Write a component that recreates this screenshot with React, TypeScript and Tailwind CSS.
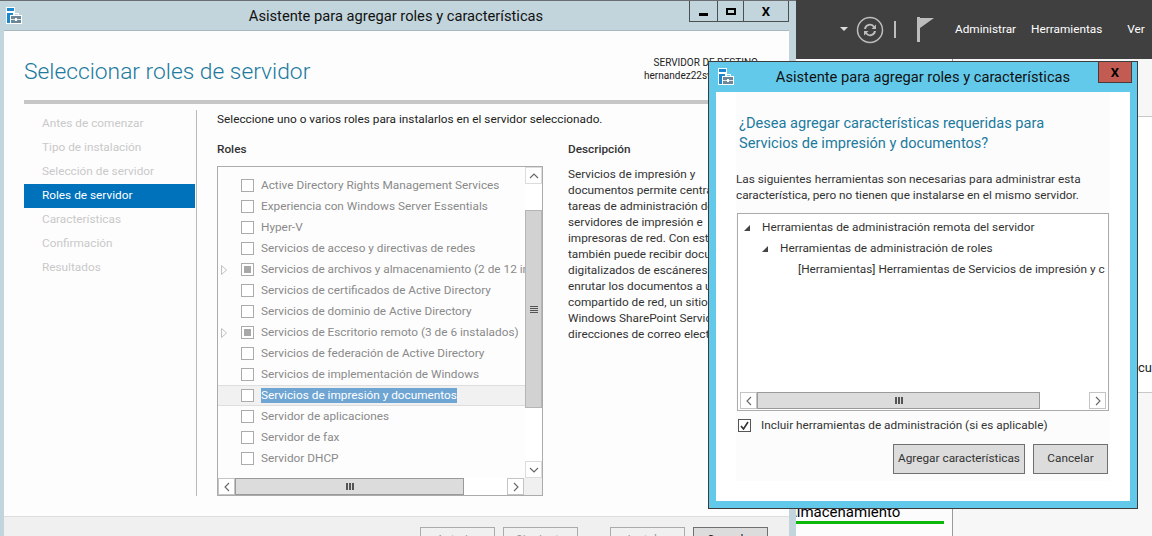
import React from 'react'

const font = "font-['Roboto','Noto_Sans',sans-serif]"

const steps = ['Antes de comenzar', 'Tipo de instalación', 'Selección de servidor', 'Roles de servidor', 'Características', 'Confirmación', 'Resultados']

const roles = [
  { name: 'Active Directory Rights Management Services' },
  { name: 'Experiencia con Windows Server Essentials' },
  { name: 'Hyper-V' },
  { name: 'Servicios de acceso y directivas de redes' },
  { name: 'Servicios de archivos y almacenamiento (2 de 12 instalados)', partial: true },
  { name: 'Servicios de certificados de Active Directory' },
  { name: 'Servicios de dominio de Active Directory' },
  { name: 'Servicios de Escritorio remoto (3 de 6 instalados)', partial: true },
  { name: 'Servicios de federación de Active Directory' },
  { name: 'Servicios de implementación de Windows' },
  { name: 'Servicios de impresión y documentos', selected: true },
  { name: 'Servidor de aplicaciones' },
  { name: 'Servidor de fax' },
  { name: 'Servidor DHCP' },
]

const description = [
  'Servicios de impresión y',
  'documentos permite centralizar las',
  'tareas de administración de',
  'servidores de impresión e',
  'impresoras de red. Con este rol,',
  'también puede recibir documentos',
  'digitalizados de escáneres de red y',
  'enrutar los documentos a un recurso',
  'compartido de red, un sitio de',
  'Windows SharePoint Services o',
  'direcciones de correo electrónico.',
]

const WizardIcon = () => (
  <svg width="16" height="17" viewBox="0 0 16 17" className="shrink-0">
    <rect x="0.5" y="0.5" width="8" height="4" fill="#1a87d0" stroke="#fff" />
    <rect x="0.5" y="5.5" width="8" height="11" fill="#1a87d0" stroke="#fff" />
    <rect x="4.5" y="8.5" width="11" height="8" fill="#6d8797" stroke="#fff" />
    <rect x="5" y="12" width="10" height="1" fill="#dfe8ec" />
    <rect x="7.5" y="6.5" width="5" height="2" fill="none" stroke="#fff" />
    <rect x="9" y="11" width="2" height="3" fill="#fff" />
  </svg>
)

const Chevron = ({ dir }: { dir: 'up' | 'down' | 'left' | 'right' }) => {
  const points = {
    up: '1,6 5,2 9,6',
    down: '1,2 5,6 9,2',
    left: '6,1 2,5 6,9',
    right: '2,1 6,5 2,9',
  }[dir]
  const size = dir === 'up' || dir === 'down' ? 'w-[10px] h-[8px]' : 'w-[8px] h-[10px]'
  const box = dir === 'up' || dir === 'down' ? '0 0 10 8' : '0 0 8 10'
  return (
    <svg viewBox={box} className={size}>
      <polyline points={points} fill="none" stroke="#666" strokeWidth="1.1" />
    </svg>
  )
}

const HScrollbar = ({ thumb }: { thumb: string }) => (
  <div className="flex h-[17px] min-w-0 flex-1 items-stretch bg-white">
    <div className="flex w-[17px] items-center justify-center border border-[#c4c4c4] bg-white">
      <Chevron dir="left" />
    </div>
    <div className="flex min-w-0 flex-1 bg-white">
      <div className={`flex items-center justify-center border border-[#9a9a9a] bg-[#dcdcdc] ${thumb}`}>
        <div className="flex gap-[1px]">
          <span className="h-[7px] w-[2px] bg-[#555]" />
          <span className="h-[7px] w-[2px] bg-[#555]" />
          <span className="h-[7px] w-[2px] bg-[#555]" />
        </div>
      </div>
    </div>
    <div className="flex w-[17px] items-center justify-center border border-[#c4c4c4] bg-white">
      <Chevron dir="right" />
    </div>
  </div>
)

const RoleRow = ({ name, partial, selected }: { name: string; partial?: boolean; selected?: boolean }) => (
  <div className={`flex h-[21px] items-center whitespace-nowrap ${selected ? 'border-y border-[#dedede] bg-[#f1f1f1]' : ''}`}>
    <div className="flex w-[23px] shrink-0 justify-center pr-[14px] pl-[3px]">
      {partial && (
        <svg width="6" height="10" viewBox="0 0 6 10" className="shrink-0">
          <polygon points="0.5,0.5 5.5,5 0.5,9.5" fill="none" stroke="#c0c0c0" />
        </svg>
      )}
    </div>
    <div className="flex size-[13px] shrink-0 items-center justify-center border border-[#ababab] bg-white">
      {partial && <div className="size-[7px] bg-[#a8a8a8]" />}
    </div>
    <span className={`ml-[7px] text-[11.8px] leading-[15px] ${selected ? 'bg-[#6fa5d3] text-white' : 'text-[#8a8a8a]'}`}>{name}</span>
  </div>
)

const MainWizard = () => (
  <div className={`absolute left-0 top-0 flex h-[536px] w-[796px] flex-col border-t border-[#6b6f72] bg-[#c2d5dc] ${font}`}>
    <div className="relative flex h-[29px] shrink-0 items-center justify-center">
      <div className="absolute left-[6px] top-[6px]">
        <WizardIcon />
      </div>
      <span className="relative left-[-2px] top-[1px] text-[14.7px] text-[#111]">Asistente para agregar roles y características</span>
      <div className="absolute left-[689px] top-0 flex h-[21px] w-[100px] border border-t-0 border-[#4a4f52]">
        <div className="flex w-[28px] items-end justify-center border-r border-[#4a4f52] pb-[5px]">
          <div className="h-[3px] w-[9px] bg-black" />
        </div>
        <div className="flex w-[26px] items-center justify-center border-r border-[#4a4f52]">
          <div className="h-[7px] w-[10px] border-2 border-black" />
        </div>
        <div className="flex flex-1 items-center justify-center text-[13px] font-bold leading-none text-black">X</div>
      </div>
    </div>
    <div className="ml-[4px] mr-[7px] flex min-h-0 flex-1 flex-col overflow-hidden border-t border-[#a9b8be] bg-[#fdfdfd]">
      <div className="flex h-[69px] shrink-0 items-start justify-between px-[20px]">
        <h1 className="mt-[26px] text-[22.8px] font-light leading-[30px] text-[#217a9e]">Seleccionar roles de servidor</h1>
        <div className="mr-[11px] mt-[25px] text-right text-[10px] leading-[13px] text-[#222]">
          <div>SERVIDOR DE DESTINO</div>
          <div>hernandez22sv.dom.local</div>
        </div>
      </div>
      <div className="mx-[20px] h-[4px] shrink-0 bg-[#c6c6c6]" />
      <div className="flex min-h-0 flex-1 pl-[20px] pt-[6px]">
        <nav className="w-[172px] shrink-0 pt-[2px] pr-[1px]">
          {steps.map((step) => (
            <div
              key={step}
              className={`flex h-[24px] items-center pl-[18px] text-[11.8px] ${step === 'Roles de servidor' ? 'bg-[#0072bc] text-white' : 'text-[#c9c9c9]'}`}
            >
              {step}
            </div>
          ))}
        </nav>
        <div className="flex h-[386px] flex-1 border-l border-[#b9b9b9] pl-[20px]">
          <div className="w-[326px] shrink-0 pt-[2px]">
            <div className="text-[11.8px] leading-[15px] text-[#222] whitespace-nowrap">Seleccione uno o varios roles para instalarlos en el servidor seleccionado.</div>
            <div className="mt-[15px] text-[11.8px] font-medium leading-[15px] text-[#333]">Roles</div>
            <div className="mt-[9px] flex h-[330px] flex-col border border-[#ababab]">
              <div className="flex min-h-0 flex-1">
                <div className="min-w-0 flex-1 overflow-hidden pt-[8px]">
                  {roles.map((role) => (
                    <RoleRow key={role.name} {...role} />
                  ))}
                </div>
                <div className="flex w-[17px] shrink-0 flex-col bg-white">
                  <div className="flex h-[17px] items-center justify-center border border-[#dcdcdc]">
                    <Chevron dir="up" />
                  </div>
                  <div className="mt-[26px] flex h-[198px] items-center justify-center border border-[#b5b5b5] bg-[#d2d2d2]">
                    <div className="flex flex-col gap-[1px]">
                      <span className="h-[1px] w-[8px] bg-[#555]" />
                      <span className="h-[1px] w-[8px] bg-[#555]" />
                      <span className="h-[1px] w-[8px] bg-[#555]" />
                      <span className="h-[1px] w-[8px] bg-[#555]" />
                    </div>
                  </div>
                  <div className="flex-1" />
                  <div className="flex h-[17px] items-center justify-center border border-[#dcdcdc]">
                    <Chevron dir="down" />
                  </div>
                </div>
              </div>
              <div className="flex bg-[#f0f0f0]">
                <HScrollbar thumb="w-[229px]" />
                <div className="w-[18px] shrink-0" />
              </div>
            </div>
          </div>
          <div className="ml-[25px] overflow-hidden pt-[32px]">
            <div className="text-[11.8px] font-medium leading-[15px] text-[#333]">Descripción</div>
            <div className="mt-[9px] whitespace-nowrap text-[11.8px] leading-[16px] text-[#333]">
              {description.map((line) => (
                <div key={line}>{line}</div>
              ))}
            </div>
          </div>
        </div>
      </div>
      <div className="flex h-[20px] shrink-0 gap-[8px] border-t border-[#dedede] bg-[#f0f0f0] pl-[416px] pt-[10px]">
        <button className="h-[26px] w-[75px] border border-[#ababab] bg-[#f0f0f0] text-[12px] text-[#999]">Anterior</button>
        <button className="h-[26px] w-[75px] border border-[#ababab] bg-[#f0f0f0] text-[12px] text-[#999]">Siguiente</button>
        <button className="ml-[24px] h-[26px] w-[75px] border border-[#ababab] bg-[#f0f0f0] text-[12px] text-[#999]">Instalar</button>
        <button className="h-[26px] w-[75px] border border-[#707070] bg-[#dcdcdc] text-[12px] text-[#222]">Cancelar</button>
      </div>
    </div>
  </div>
)

const FeatureDialog = () => (
  <div className={`absolute left-[708px] top-[61px] flex h-[448px] w-[430px] flex-col border border-[#3c3c3c] bg-[#63c9eb] ${font}`}>
    <div className="relative flex h-[30px] shrink-0 items-center justify-center">
      <div className="absolute left-[9px] top-[6px]">
        <WizardIcon />
      </div>
      <span className="text-[14.7px] text-[#111]">Asistente para agregar roles y características</span>
      <div className="absolute right-[5px] top-0 flex h-[21px] w-[34px] items-center justify-center border border-t-0 border-[#4a3a38] bg-[#c25b52] text-[13px] font-bold leading-none text-black">X</div>
    </div>
    <div className="mx-[7px] mb-[7px] flex min-h-0 flex-1 flex-col bg-white px-[20px]">
      <div className="flex flex-1 flex-col bg-[#fcfcfc]">
        <h2 className="ml-[3px] mt-[21px] text-[14.6px] leading-[20px] text-[#217a9e] whitespace-nowrap">
          ¿Desea agregar características requeridas para
          <br />
          Servicios de impresión y documentos?
        </h2>
        <p className="mt-[18px] text-[11.8px] leading-[16px] text-[#333] whitespace-nowrap">
          Las siguientes herramientas son necesarias para administrar esta
          <br />
          característica, pero no tienen que instalarse en el mismo servidor.
        </p>
        <div className="ml-[1px] mr-[1px] mt-[10px] flex h-[198px] flex-col border border-[#ababab] bg-white">
          <div className="min-h-0 flex-1 overflow-hidden pt-[3px] text-[11.8px] text-[#333] whitespace-nowrap">
            <div className="flex h-[21px] items-center pl-[6px]">
              <svg width="6" height="6" viewBox="0 0 6 6"><polygon points="0,6 6,0 6,6" fill="#444" /></svg>
              <span className="ml-[12px]">Herramientas de administración remota del servidor</span>
            </div>
            <div className="flex h-[21px] items-center pl-[24px]">
              <svg width="6" height="6" viewBox="0 0 6 6"><polygon points="0,6 6,0 6,6" fill="#444" /></svg>
              <span className="ml-[12px]">Herramientas de administración de roles</span>
            </div>
            <div className="flex h-[21px] items-center pl-[60px]">
              <span>[Herramientas] Herramientas de Servicios de impresión y c</span>
            </div>
          </div>
          <div className="flex px-[2px] pb-[1px]">
            <HScrollbar thumb="w-[283px]" />
          </div>
        </div>
        <label className="mt-[7px] flex items-center pl-[2px] text-[11.8px] leading-[15px] text-[#333]">
          <span className="flex size-[13px] items-center justify-center border border-[#555] bg-white">
            <svg width="9" height="9" viewBox="0 0 9 9"><polyline points="1,5 3.5,8 8,1" fill="none" stroke="#333" strokeWidth="1.6" /></svg>
          </span>
          <span className="ml-[10px]">Incluir herramientas de administración (si es aplicable)</span>
        </label>
        <div className="mt-[11px] flex justify-end gap-[8px] pr-[2px]">
          <button className="h-[30px] w-[132px] border border-[#707070] bg-[#dcdcdc] text-[11.8px] text-[#333]">Agregar características</button>
          <button className="h-[30px] w-[75px] border border-[#707070] bg-[#dcdcdc] text-[11.8px] text-[#333]">Cancelar</button>
        </div>
      </div>
      <div className="h-[20px] shrink-0" />
    </div>
  </div>
)

const Backdrop = () => (
  <div className={`absolute left-[796px] top-0 flex h-[536px] w-[356px] flex-col overflow-hidden bg-[#f7f7f7] ${font}`}>
    <div className="flex h-[59px] shrink-0 items-center bg-[#404040] pl-[44px] text-[11.8px] text-white">
      <svg width="9" height="5" viewBox="0 0 9 5"><polygon points="0,0 8,0 4,4" fill="#ddd" /></svg>
      <svg width="28" height="28" viewBox="0 0 28 28" className="ml-[7px]">
        <circle cx="14" cy="14" r="12.5" fill="none" stroke="#bdbdbd" strokeWidth="1.5" />
        <path d="M8 13a6 6 0 0 1 10.5-3l1.5-1.5V13h-4.5l1.7-1.7A4 4 0 0 0 10 13z" fill="#bdbdbd" />
        <path d="M20 15a6 6 0 0 1-10.5 3L8 19.5V15h4.5l-1.7 1.7A4 4 0 0 0 18 15z" fill="#bdbdbd" />
      </svg>
      <div className="ml-[10px] h-[17px] w-[2px] bg-[#bdbdbd]" />
      <svg width="18" height="25" viewBox="0 0 18 25" className="ml-[21px]">
        <rect x="0" y="0" width="3" height="25" fill="#bdbdbd" />
        <polygon points="3,1 17,1 3,11" fill="#bdbdbd" />
      </svg>
      <span className="ml-[20px]">Administrar</span>
      <span className="ml-[15px]">Herramientas</span>
      <span className="ml-[25px]">Ver</span>
    </div>
    <div className="relative flex min-h-0 flex-1">
      <div className="relative w-[157px] shrink-0 border-r border-[#9a9a9a] bg-[#fcfcfc]">
        <div className="absolute left-[-9px] top-[445px] text-[15px] leading-[16px] text-black whitespace-nowrap">Almacenamiento</div>
        <div className="absolute left-0 top-[462px] h-[3px] w-[148px] bg-[#0cb80c]" />
      </div>
      <div className="flex min-w-0 flex-1 flex-col">
        <div className="mt-[57px] h-[277px] border-y border-[#c8c8c8] bg-white pl-[185px] pt-[243px] text-[13px] leading-[16px] text-[#222]">cu</div>
      </div>
    </div>
  </div>
)

export default function App() {
  return (
    <div className="relative h-[536px] w-[1152px] overflow-hidden bg-white">
      <Backdrop />
      <MainWizard />
      <FeatureDialog />
    </div>
  )
}
